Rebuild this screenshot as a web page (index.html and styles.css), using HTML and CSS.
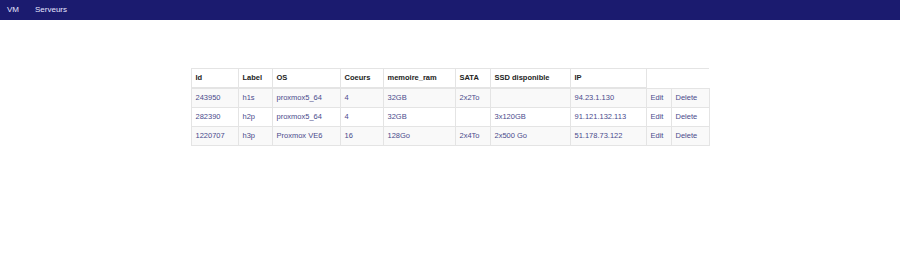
FILE: index.html
```html
<!DOCTYPE html>
<html lang="fr">

<head>
    <meta charset="UTF-8">
    <meta name="viewport" content="width=device-width, initial-scale=1.0">
    <title>VM</title>
    <link rel="stylesheet" href="styles.css">
</head>

<body>
    <nav class="navbar">
        <a href="#" class="nav-link">VM</a>
        <a href="#" class="nav-link">Serveurs</a>
    </nav>

    <div class="content">
        <table class="vm-table">
            <colgroup>
                <col class="c-id">
                <col class="c-label">
                <col class="c-os">
                <col class="c-coeurs">
                <col class="c-ram">
                <col class="c-sata">
                <col class="c-ssd">
                <col class="c-ip">
                <col class="c-edit">
                <col class="c-delete">
            </colgroup>
            <thead>
                <tr>
                    <th>Id</th>
                    <th>Label</th>
                    <th>OS</th>
                    <th>Coeurs</th>
                    <th>memoire_ram</th>
                    <th>SATA</th>
                    <th>SSD disponible</th>
                    <th>IP</th>
                </tr>
            </thead>
            <tbody>
                <tr>
                    <td>243950</td>
                    <td>h1s</td>
                    <td>proxmox5_64</td>
                    <td>4</td>
                    <td>32GB</td>
                    <td>2x2To</td>
                    <td></td>
                    <td>94.23.1.130</td>
                    <td><a href="#">Edit</a></td>
                    <td><a href="#">Delete</a></td>
                </tr>
                <tr>
                    <td>282390</td>
                    <td>h2p</td>
                    <td>proxmox5_64</td>
                    <td>4</td>
                    <td>32GB</td>
                    <td></td>
                    <td>3x120GB</td>
                    <td>91.121.132.113</td>
                    <td><a href="#">Edit</a></td>
                    <td><a href="#">Delete</a></td>
                </tr>
                <tr>
                    <td>1220707</td>
                    <td>h3p</td>
                    <td>Proxmox VE6</td>
                    <td>16</td>
                    <td>128Go</td>
                    <td>2x4To</td>
                    <td>2x500 Go</td>
                    <td>51.178.73.122</td>
                    <td><a href="#">Edit</a></td>
                    <td><a href="#">Delete</a></td>
                </tr>
            </tbody>
        </table>
    </div>
</body>

</html>
```

FILE: styles.css
```css
body {
    font-family: "Liberation Sans", Arial, sans-serif;
    margin: 0;
    padding: 0;
    background-color: #fff;
    color: #333;
}

.navbar {
    display: flex;
    align-items: center;
    height: 20px;
    background-color: #1b1b6f;
    padding: 0 7px 2px;
    box-sizing: border-box;
    gap: 16px;
}

.nav-link {
    color: #e6e6ff;
    text-decoration: none;
    font-size: 8px;
}

.content {
    padding-top: 48px;
}

.vm-table {
    width: 518px;
    margin: 0 auto;
    table-layout: fixed;
    border-collapse: collapse;
    border-top: 1px solid #e4e4e4;
    font-size: 7.5px;
}

.c-id { width: 47px; }
.c-label { width: 34px; }
.c-os { width: 68px; }
.c-coeurs { width: 43px; }
.c-ram { width: 72px; }
.c-sata { width: 35px; }
.c-ssd { width: 80px; }
.c-ip { width: 76px; }
.c-edit { width: 25px; }
.c-delete { width: 38px; }

.vm-table th,
.vm-table td {
    text-align: left;
    padding: 4px 4px;
    line-height: 10px;
    border: 1px solid #e4e4e4;
    white-space: nowrap;
}

.vm-table th {
    font-weight: bold;
    color: #222;
    border-bottom: 2px solid #e4e4e4;
}

.vm-table td {
    color: #4a4a8c;
}

.vm-table tbody tr:nth-child(odd) {
    background-color: #f9f9f9;
}

.vm-table a {
    color: #4a4a8c;
    text-decoration: none;
}
```
